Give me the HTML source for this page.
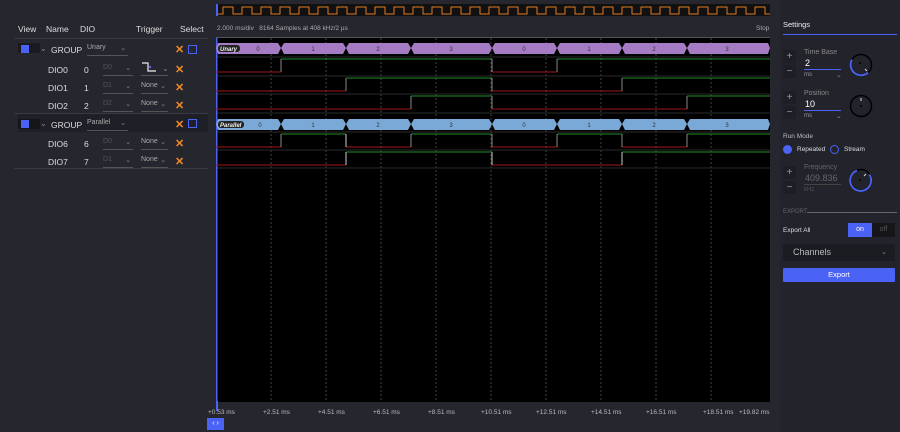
<!DOCTYPE html>
<html><head><meta charset="utf-8"><style>
*{margin:0;padding:0;box-sizing:border-box}
body{width:900px;height:432px;background:#26262f;font-family:"Liberation Sans",sans-serif;color:#ddd;position:relative;overflow:hidden;font-size:8px}
.a{position:absolute;white-space:nowrap}
.hd{font-size:8.5px;color:#ddd}
.sq{position:absolute;width:8px;height:8px;background:#4b63f5}
.sel{position:absolute;width:9px;height:9px;border:1.5px solid #4b63f5}
.x{position:absolute;color:#f28c28;font-size:11px;font-weight:bold}
.dd{position:absolute;border-bottom:1px solid #555;color:#888;font-size:7px;height:12px}
.dd i{position:absolute;right:2px;top:0;font-style:normal;color:#888}
.rp{position:absolute;left:780px;top:0;width:120px;height:432px;background:#23232c}
.btn{position:absolute;width:13px;height:13px;background:#1e1e26;color:#999;font-size:10px;text-align:center;line-height:13px}
</style></head><body>
<div class="a hd" style="left:18px;top:24px">View</div>
<div class="a hd" style="left:46px;top:24px">Name</div>
<div class="a hd" style="left:80px;top:24px">DIO</div>
<div class="a hd" style="left:136px;top:24px">Trigger</div>
<div class="a hd" style="left:180px;top:24px">Select</div>
<div class="a" style="left:14px;top:38px;width:194px;height:1px;background:#3a3a44"></div>
<div class="a" style="left:18px;top:43px;width:22px;height:10px;background:#1a1a20"></div>
<div class="sq" style="left:21px;top:45px"></div>
<div class="a" style="left:40px;top:44px;color:#888">⌄</div>
<div class="a hd" style="left:51px;top:45px">GROUP</div>
<div class="dd" style="left:87px;top:44px;width:41px;color:#aaa">Unary<i>⌄</i></div>
<div class="x" style="left:175px;top:43px">✕</div><div class="sel" style="left:188px;top:45px"></div>
<div class="a hd" style="left:48px;top:65px">DIO0</div><div class="a hd" style="left:84px;top:65px">0</div>
<div class="dd" style="left:103px;top:64px;width:30px;color:#555">D0<i>⌄</i></div>
<svg class="a" style="left:141px;top:61px" width="20" height="12"><path d="M1 2H7V10H15" stroke="#eee" fill="none" stroke-width="1.2"/><circle cx="9" cy="6" r="1.2" fill="#4b63f5"/></svg>
<div class="a" style="left:141px;top:75px;width:27px;height:1px;background:#555"></div>
<div class="a" style="left:162px;top:64px;color:#888">⌄</div>
<div class="x" style="left:175px;top:63px">✕</div>
<div class="a hd" style="left:48px;top:83px">DIO1</div><div class="a hd" style="left:84px;top:83px">1</div>
<div class="dd" style="left:103px;top:82px;width:30px;color:#555">D1<i>⌄</i></div>
<div class="dd" style="left:141px;top:82px;width:27px;color:#aaa">None<i>⌄</i></div>
<div class="x" style="left:175px;top:81px">✕</div>
<div class="a hd" style="left:48px;top:101px">DIO2</div><div class="a hd" style="left:84px;top:101px">2</div>
<div class="dd" style="left:103px;top:100px;width:30px;color:#555">D2<i>⌄</i></div>
<div class="dd" style="left:141px;top:100px;width:27px;color:#aaa">None<i>⌄</i></div>
<div class="x" style="left:175px;top:99px">✕</div>
<div class="a" style="left:14px;top:113px;width:194px;height:1px;background:#3a3a44"></div>
<div class="a" style="left:18px;top:114px;width:190px;height:18px;background:#1f1f27"></div>
<div class="a" style="left:18px;top:119px;width:22px;height:10px;background:#15151a"></div>
<div class="sq" style="left:21px;top:120px"></div>
<div class="a" style="left:40px;top:119px;color:#888">⌄</div>
<div class="a hd" style="left:51px;top:120px">GROUP</div>
<div class="dd" style="left:87px;top:119px;width:41px;color:#aaa">Parallel<i>⌄</i></div>
<div class="x" style="left:175px;top:118px">✕</div><div class="sel" style="left:188px;top:119px"></div>
<div class="a hd" style="left:48px;top:139px">DIO6</div><div class="a hd" style="left:84px;top:139px">6</div>
<div class="dd" style="left:103px;top:138px;width:30px;color:#555">D0<i>⌄</i></div>
<div class="dd" style="left:141px;top:138px;width:27px;color:#aaa">None<i>⌄</i></div>
<div class="x" style="left:175px;top:137px">✕</div>
<div class="a hd" style="left:48px;top:157px">DIO7</div><div class="a hd" style="left:84px;top:157px">7</div>
<div class="dd" style="left:103px;top:156px;width:30px;color:#555">D1<i>⌄</i></div>
<div class="dd" style="left:141px;top:156px;width:27px;color:#aaa">None<i>⌄</i></div>
<div class="x" style="left:175px;top:155px">✕</div>
<div class="a" style="left:14px;top:168px;width:194px;height:1px;background:#3a3a44"></div>

<svg class="a" style="left:216px;top:4px" width="554" height="12">
<defs><pattern id="p" x="2" y="0" width="19" height="12" patternUnits="userSpaceOnUse"><path d="M0 10H5V3H15V10H19" fill="none" stroke="#e07a20" stroke-width="1"/></pattern></defs>
<rect width="554" height="12" fill="#111"/>
<rect x="2" width="552" height="12" fill="url(#p)"/>
<rect x="0" y="0" width="2" height="12" fill="#4b63f5"/></svg>
<div class="a" style="left:217px;top:25px;font-size:6.5px;color:#aaa">2.000 ms/div &nbsp;&nbsp;8164 Samples at 408 kHz/2 µs</div>
<div class="a" style="left:756px;top:25px;font-size:6.5px;color:#aaa">Stop</div>
<div class="a" style="left:216px;top:37px;width:554px;height:1px;background:#555"></div>

<svg class="a" style="left:216px;top:38px" width="554" height="364">
<rect width="554" height="364" fill="#000"/>
<g stroke="#444" stroke-dasharray="2,2" stroke-width="1">
<path d="M55 0V364M110 0V364M165 0V364M220 0V364M275 0V364M330 0V364M385 0V364M440 0V364M495 0V364"/></g>
<g stroke="#2a2a2a"><path d="M0 19H554M0 38H554M0 56H554M0 75H554M0 94H554M0 112H554M0 130H554"/></g>
<rect x="0" y="0" width="1.5" height="364" fill="#4b63f5"/>
<g fill="#a57cc4"><path d="M2 5H62L65 10L62 16H2L0 10Z"/><path d="M68 5H127L130 10L127 16H68L65 10Z"/><path d="M133 5H192L195 10L192 16H133L130 10Z"/><path d="M198 5H273L276 10L273 16H198L195 10Z"/><path d="M279 5H338L341 10L338 16H279L276 10Z"/><path d="M344 5H403L406 10L403 16H344L341 10Z"/><path d="M409 5H468L471 10L468 16H409L406 10Z"/><path d="M474 5H552L554 10L552 16H474L471 10Z"/></g>
<g fill="#7aa9d8"><path d="M2 81H62L65 86L62 92H2L0 86Z"/><path d="M68 81H127L130 86L127 92H68L65 86Z"/><path d="M133 81H192L195 86L192 92H133L130 86Z"/><path d="M198 81H273L276 86L273 92H198L195 86Z"/><path d="M279 81H338L341 86L338 92H279L276 86Z"/><path d="M344 81H403L406 86L403 92H344L341 86Z"/><path d="M409 81H468L471 86L468 92H409L406 86Z"/><path d="M474 81H552L554 86L552 92H474L471 86Z"/></g>
<g font-family="Liberation Sans" font-size="6" fill="#333" text-anchor="middle">
<text x="42" y="13">0</text><text x="97" y="13">1</text><text x="162" y="13">2</text><text x="235" y="13">3</text><text x="308" y="13">0</text><text x="373" y="13">1</text><text x="438" y="13">2</text><text x="511" y="13">3</text>
<text x="44" y="89">0</text><text x="97" y="89">1</text><text x="162" y="89">2</text><text x="235" y="89">3</text><text x="308" y="89">0</text><text x="373" y="89">1</text><text x="438" y="89">2</text><text x="511" y="89">3</text></g>
<rect x="2" y="7" width="22" height="7" rx="3" fill="#222"/><text x="4" y="13" font-family="Liberation Sans" font-size="6" font-style="italic" font-weight="bold" fill="#eee">Unary</text>
<rect x="2" y="83" width="26" height="7" rx="3" fill="#222"/><text x="4" y="89" font-family="Liberation Sans" font-size="6" font-style="italic" font-weight="bold" fill="#eee">Parallel</text>
<g fill="none" stroke-width="1">
<path stroke="#a01818" d="M0 34H65M276 34H341"/><path stroke="#1f8a2a" d="M65 21H276M341 21H554"/><path stroke="#888" d="M65 21V34M276 21V34M341 21V34"/>
<path stroke="#a01818" d="M0 53H130M276 53H406"/><path stroke="#1f8a2a" d="M130 40H276M406 40H554"/><path stroke="#888" d="M130 40V53M276 40V53M406 40V53"/>
<path stroke="#a01818" d="M0 71H195M276 71H471"/><path stroke="#1f8a2a" d="M195 58H276M471 58H554"/><path stroke="#888" d="M195 58V71M276 58V71M471 58V71"/>
<path stroke="#a01818" d="M0 109H65M130 109H195M276 109H341M406 109H471"/><path stroke="#1f8a2a" d="M65 96H130M195 96H276M341 96H406M471 96H554"/><path stroke="#888" d="M65 96V109M195 96V109M276 96V109M341 96V109M406 96V109M471 96V109"/><path stroke="#ccc" d="M130 96V109"/>
<path stroke="#a01818" d="M0 127H130M276 127H406"/><path stroke="#1f8a2a" d="M130 114H276M406 114H554"/><path stroke="#ccc" d="M130 114V127M276 114V127M406 114V127"/>
</g></svg>
<div class="a" style="left:216px;top:401px;width:2px;height:10px;background:#4b63f5"></div>
<div style="position:absolute;left:0;top:409px;font-size:6.5px;color:#bbb">
<span class="a" style="left:208px">+0.53 ms</span><span class="a" style="left:263px">+2.51 ms</span><span class="a" style="left:318px">+4.51 ms</span><span class="a" style="left:373px">+6.51 ms</span><span class="a" style="left:428px">+8.51 ms</span><span class="a" style="left:481px">+10.51 ms</span><span class="a" style="left:536px">+12.51 ms</span><span class="a" style="left:591px">+14.51 ms</span><span class="a" style="left:646px">+16.51 ms</span><span class="a" style="left:703px">+18.51 ms</span><span class="a" style="left:739px">+19.82 ms</span></div>
<div class="a" style="left:207px;top:418px;width:17px;height:12px;background:#4b63f5;color:#fff;font-size:7px;text-align:center;line-height:12px">‹ ›</div>

<div class="rp"></div>
<div class="a" style="left:783px;top:20px;font-size:7.5px;color:#eee">Settings</div>
<div class="a" style="left:783px;top:34px;width:114px;height:1px;background:#4b63f5"></div>
<div class="btn" style="left:783px;top:50px">+</div><div class="btn" style="left:783px;top:65px">−</div>
<div class="a" style="left:804px;top:49px;font-size:7px;color:#888">Time Base</div>
<div class="a" style="left:805px;top:58px;font-size:9px;color:#fff">2</div>
<div class="a" style="left:804px;top:69px;width:37px;height:1px;background:#4b63f5"></div>
<div class="a" style="left:804px;top:72px;font-size:6px;color:#999">ms</div><div class="a" style="left:836px;top:71px;font-size:7px;color:#888">⌄</div>
<svg class="a" style="left:848px;top:52px" width="26" height="26"><circle cx="13" cy="13" r="10.5" fill="none" stroke="#000" stroke-width="1.5"/><path d="M13 2.5A10.5 10.5 0 0 0 10 23" fill="none" stroke="#4b63f5" stroke-width="1.8" transform="rotate(-60 13 13)"/><circle cx="12" cy="11" r="1" fill="#000"/><path d="M17 17l2 2" stroke="#ddd"/></svg>
<div class="btn" style="left:783px;top:91px">+</div><div class="btn" style="left:783px;top:106px">−</div>
<div class="a" style="left:804px;top:90px;font-size:7px;color:#888">Position</div>
<div class="a" style="left:805px;top:99px;font-size:9px;color:#fff">10</div>
<div class="a" style="left:804px;top:110px;width:37px;height:1px;background:#4b63f5"></div>
<div class="a" style="left:804px;top:113px;font-size:6px;color:#999">ms</div><div class="a" style="left:836px;top:112px;font-size:7px;color:#888">⌄</div>
<svg class="a" style="left:848px;top:93px" width="26" height="26"><circle cx="13" cy="13" r="10.5" fill="none" stroke="#000" stroke-width="1.5"/><circle cx="13" cy="13" r="1" fill="#000"/><path d="M13 5v3" stroke="#ddd"/></svg>
<div class="a" style="left:783px;top:133px;font-size:6.5px;color:#bbb">Run Mode</div>
<div class="a" style="left:783px;top:145px;width:9px;height:9px;border-radius:50%;background:#4b63f5"></div>
<div class="a" style="left:797px;top:146px;font-size:6.5px;color:#ddd">Repeated</div>
<div class="a" style="left:830px;top:145px;width:9px;height:9px;border-radius:50%;border:1.5px solid #4b63f5"></div>
<div class="a" style="left:844px;top:146px;font-size:6.5px;color:#ddd">Stream</div>
<div class="btn" style="left:783px;top:166px">+</div><div class="btn" style="left:783px;top:181px">−</div>
<div class="a" style="left:804px;top:164px;font-size:7px;color:#666">Frequency</div>
<div class="a" style="left:805px;top:173px;font-size:9px;color:#666">409.836</div>
<div class="a" style="left:804px;top:184px;width:37px;height:1px;background:#444"></div>
<div class="a" style="left:804px;top:187px;font-size:6px;color:#555">kHz</div>
<svg class="a" style="left:848px;top:167px" width="26" height="26"><circle cx="13" cy="13" r="10.5" fill="none" stroke="#000" stroke-width="1.5"/><path d="M19 5A10.5 10.5 0 1 1 6 5.5" fill="none" stroke="#4b63f5" stroke-width="1.8" transform="rotate(20 13 13)"/><circle cx="12" cy="13" r="1" fill="#000"/><path d="M16 9l2-2" stroke="#ddd"/></svg>
<div class="a" style="left:783px;top:209px;font-size:6px;color:#666">EXPORT</div>
<div class="a" style="left:807px;top:212px;width:90px;height:1px;background:#666"></div>
<div class="a" style="left:783px;top:227px;font-size:6.5px;color:#ddd">Export All</div>
<div class="a" style="left:848px;top:223px;width:24px;height:14px;background:#4b63f5;color:#fff;font-size:7px;text-align:center;line-height:14px">on</div>
<div class="a" style="left:872px;top:223px;width:23px;height:14px;background:#15151a;color:#555;font-size:7px;text-align:center;line-height:14px">off</div>
<div class="a" style="left:783px;top:244px;width:112px;height:17px;background:#1b1b22;color:#bbb;font-size:9px;line-height:17px;padding-left:10px">Channels<span style="position:absolute;right:8px;font-size:7px;color:#888">⌄</span></div>
<div class="a" style="left:783px;top:268px;width:112px;height:14px;background:#4b63f5;color:#fff;font-size:7.5px;text-align:center;line-height:14px;border-radius:1px">Export</div>
</body></html>
